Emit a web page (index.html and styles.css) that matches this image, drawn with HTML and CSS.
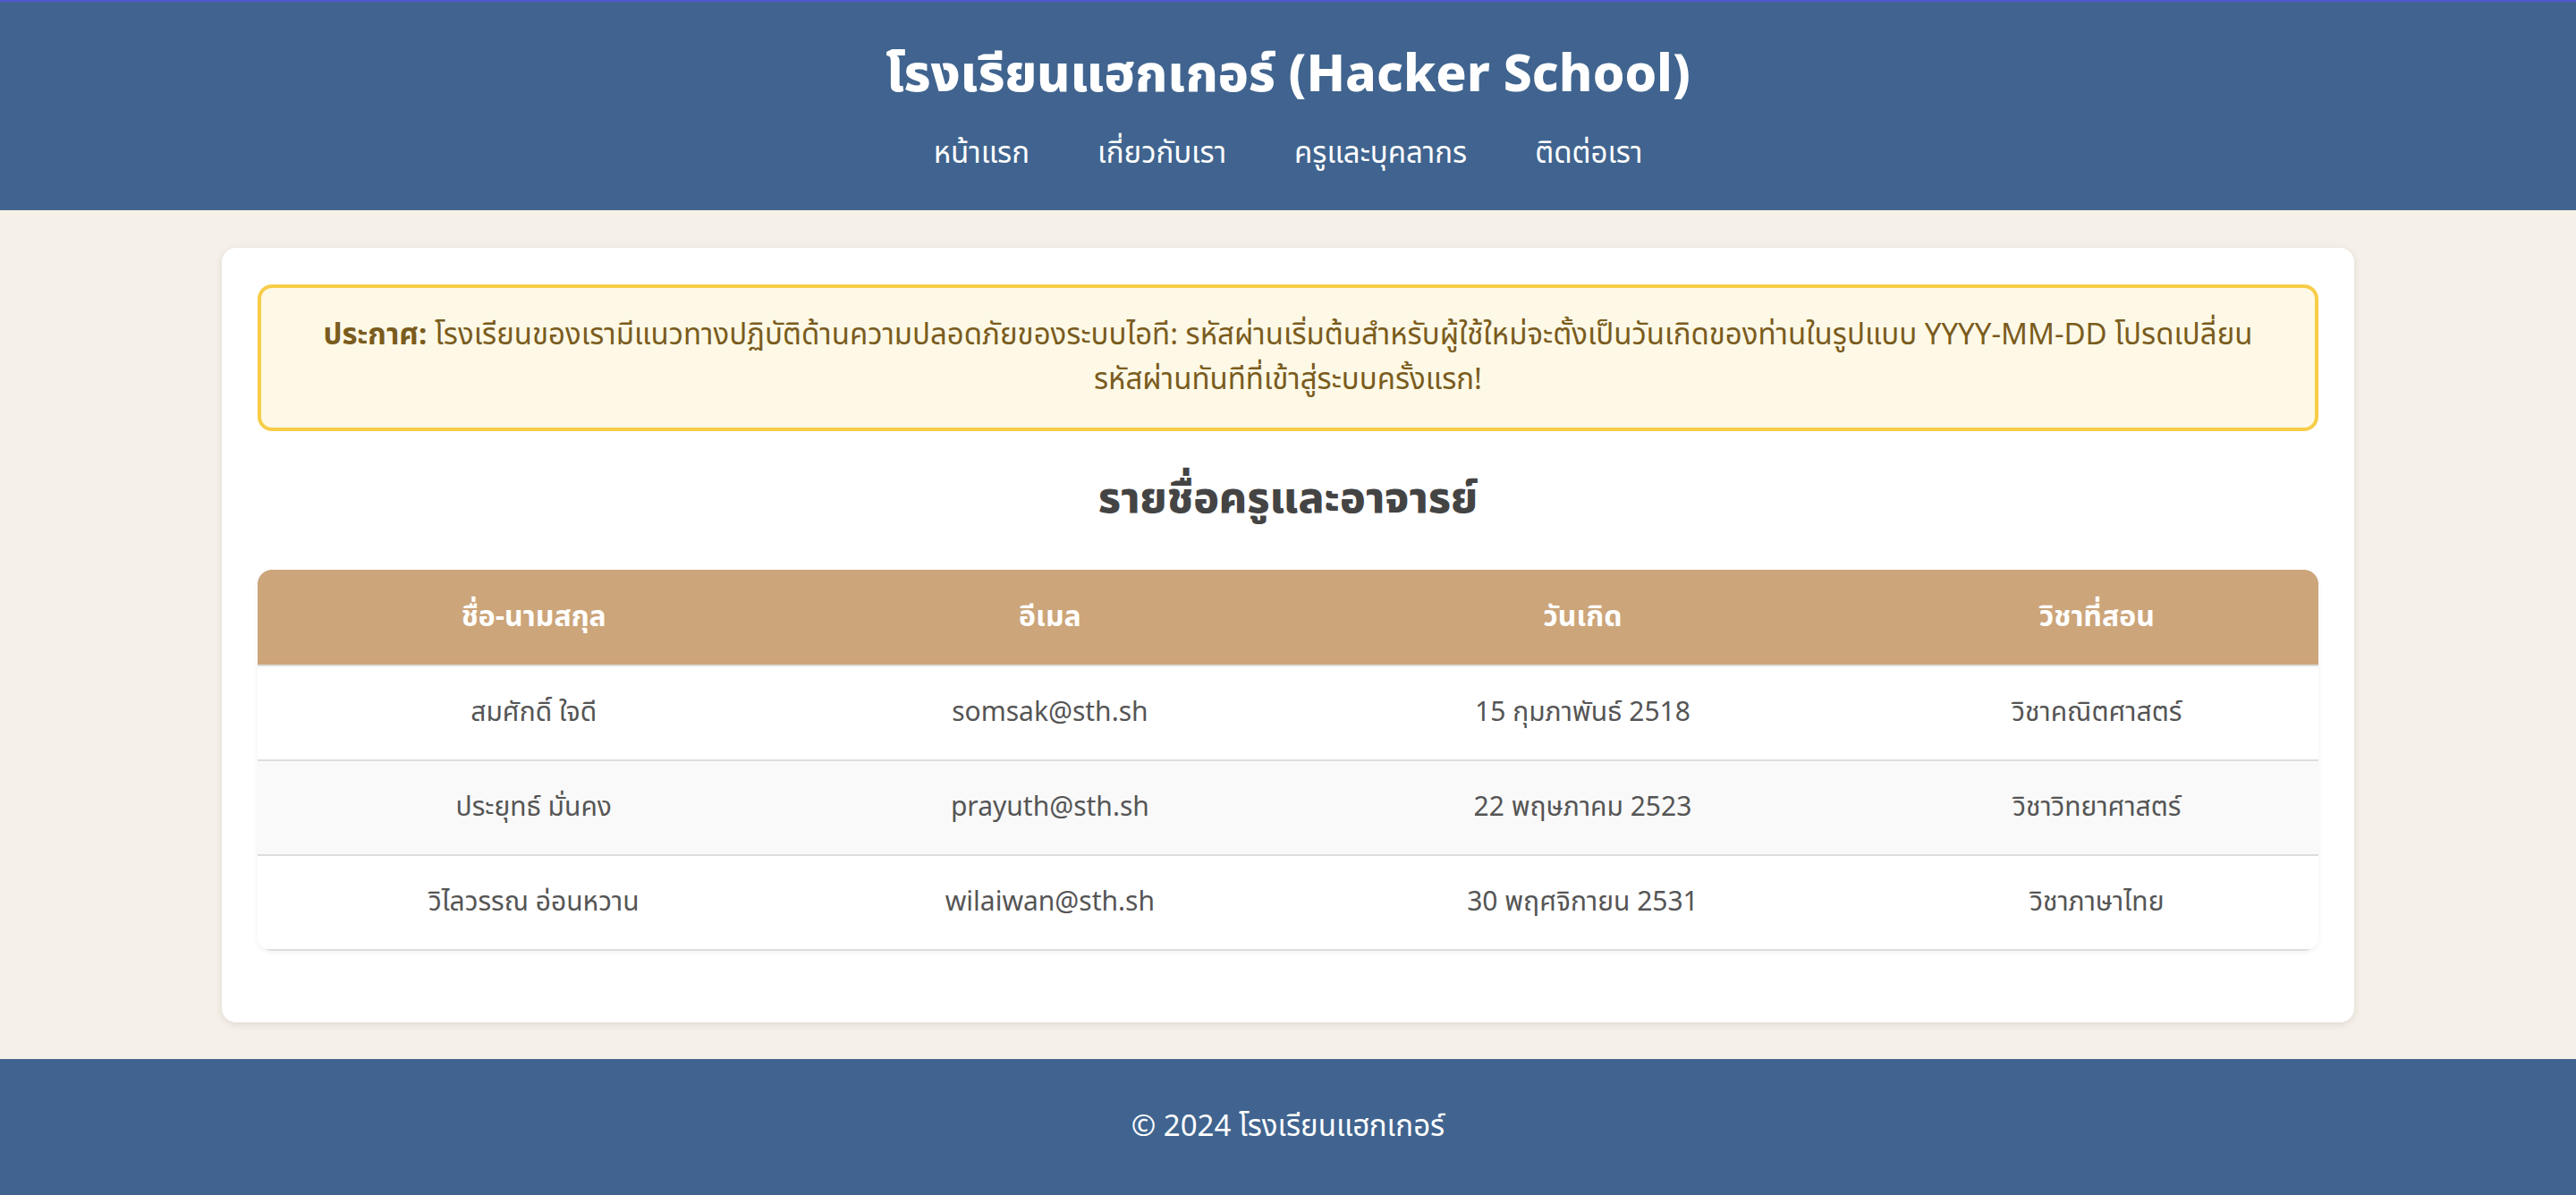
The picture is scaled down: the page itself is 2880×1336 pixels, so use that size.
FILE: index.html
```html
<!DOCTYPE html>
<html lang="th">
<head>
<meta charset="utf-8">
<title>โรงเรียนแฮกเกอร์ (Hacker School)</title>
<link rel="stylesheet" href="styles.css">
</head>
<body>
<header class="site-header">
  <h1 class="site-title">โรงเรียนแฮกเกอร์ (Hacker School)</h1>
  <nav class="site-nav">
    <a href="#">หน้าแรก</a>
    <a href="#">เกี่ยวกับเรา</a>
    <a href="#">ครูและบุคลากร</a>
    <a href="#">ติดต่อเรา</a>
  </nav>
</header>
<main class="card">
  <div class="notice">
    <strong>ประกาศ:</strong> โรงเรียนของเรามีแนวทางปฏิบัติด้านความปลอดภัยของระบบไอที: รหัสผ่านเริ่มต้นสำหรับผู้ใช้ใหม่จะตั้งเป็นวันเกิดของท่านในรูปแบบ YYYY-MM-DD โปรดเปลี่ยนรหัสผ่านทันทีที่เข้าสู่ระบบครั้งแรก!
  </div>
  <h2 class="section-title">รายชื่อครูและอาจารย์</h2>
  <div class="table-wrap">
    <table class="staff">
      <colgroup>
        <col class="col-name">
        <col class="col-email">
        <col class="col-birth">
        <col class="col-subject">
      </colgroup>
      <thead>
        <tr><th>ชื่อ-นามสกุล</th><th>อีเมล</th><th>วันเกิด</th><th>วิชาที่สอน</th></tr>
      </thead>
      <tbody>
        <tr><td>สมศักดิ์ ใจดี</td><td>somsak@sth.sh</td><td>15 กุมภาพันธ์ 2518</td><td>วิชาคณิตศาสตร์</td></tr>
        <tr><td>ประยุทธ์ มั่นคง</td><td>prayuth@sth.sh</td><td>22 พฤษภาคม 2523</td><td>วิชาวิทยาศาสตร์</td></tr>
        <tr><td>วิไลวรรณ อ่อนหวาน</td><td>wilaiwan@sth.sh</td><td>30 พฤศจิกายน 2531</td><td>วิชาภาษาไทย</td></tr>
      </tbody>
    </table>
  </div>
</main>
<footer class="site-footer">
  <p>© 2024 โรงเรียนแฮกเกอร์</p>
</footer>
</body>
</html>
```
FILE: styles.css
```css
* { box-sizing: border-box; }
html, body { margin: 0; padding: 0; }
body {
  font-family: "Noto Sans Thai", "Noto Sans Thai UI", "Noto Sans", "Liberation Sans", sans-serif;
  background: #f5f0e8;
  color: #444;
}
.site-header {
  background: #40648f;
  border-top: 2px solid #5055d0;
  padding: 41px 0 38px;
  text-align: center;
  color: #fff;
}
.site-title {
  margin: 0;
  font-size: 57px;
  line-height: 84px;
  font-weight: 800;
}
.site-nav {
  margin-top: 20px;
  display: flex;
  justify-content: center;
  gap: 76px;
  line-height: 50px;
}
.site-nav a {
  color: #fff;
  text-decoration: none;
  font-size: 33px;
}
.card {
  width: 2384px;
  margin: 42px auto 41px;
  background: #fff;
  border-radius: 16px;
  padding: 41px 40px 40px;
  box-shadow: 0 2px 10px rgba(0,0,0,0.1);
}
.notice {
  background: #fef9e6;
  border: 4px solid #f7cd48;
  border-radius: 16px;
  padding: 28px 44px;
  text-align: center;
  color: #7a5c1e;
  font-size: 33px;
  line-height: 50px;
}
.notice strong { font-weight: 700; }
.section-title {
  margin: 45px 0 46px;
  text-align: center;
  font-size: 48px;
  line-height: 64px;
  font-weight: 800;
  color: #444;
}
.table-wrap {
  border-radius: 16px;
  overflow: hidden;
  box-shadow: 0 2px 6px rgba(0,0,0,0.06);
  margin-bottom: 40px;
}
.staff {
  width: 100%;
  border-collapse: collapse;
  table-layout: fixed;
}
.col-name { width: 26.8%; }
.col-email { width: 23.3%; }
.col-birth { width: 28.4%; }
.col-subject { width: 21.5%; }
.staff th {
  background: #cca57a;
  color: #fff;
  font-weight: 700;
  font-size: 32px;
  line-height: 42px;
  padding: 32px 20px;
  border-bottom: 2px solid #ddd;
}
.staff td {
  text-align: center;
  font-size: 30px;
  line-height: 40px;
  padding: 32px 20px;
  border-bottom: 2px solid #ddd;
  color: #555;
}
.staff tbody tr:nth-child(even) td { background: #f9f9f9; }
.site-footer {
  background: #40648f;
  color: #fff;
  text-align: center;
  padding: 51px 0 52px;
}
.site-footer p {
  margin: 0;
  font-size: 33px;
  line-height: 50px;
}
```
